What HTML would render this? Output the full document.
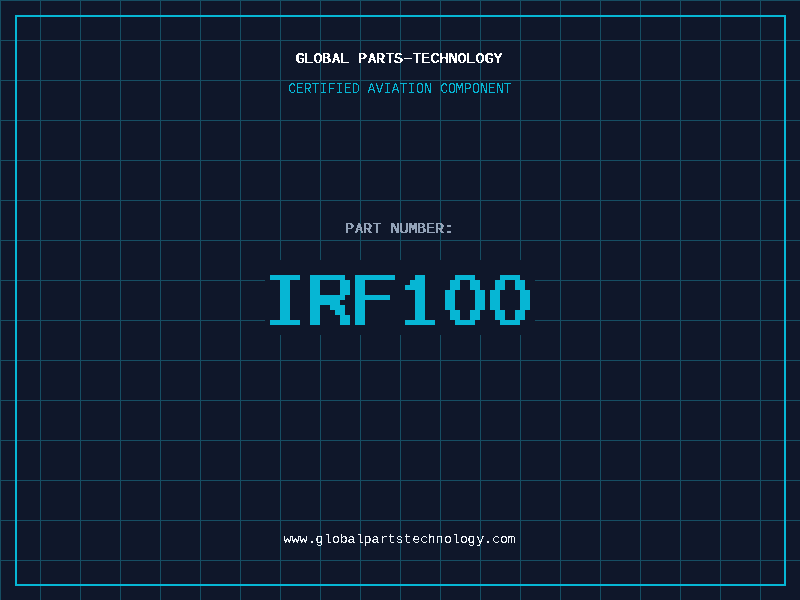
<!DOCTYPE html>
<html lang="en">
<head>
<meta charset="utf-8">
<title>IRF100 - Global Parts-Technology</title>
<style>
  html, body { margin: 0; padding: 0; }
  body {
    width: 800px; height: 600px; overflow: hidden; position: relative;
    background-color: #0f172a;
    background-image:
      linear-gradient(to right, #164e63 1px, transparent 1px),
      linear-gradient(to bottom, #164e63 1px, transparent 1px);
    background-size: 40px 40px;
    background-position: 0 0;
    font-family: "Liberation Mono", "DejaVu Sans Mono", monospace;
  }
  .frame {
    position: absolute; left: 15px; top: 15px; width: 771px; height: 571px;
    box-sizing: border-box; border: 2px solid #06b6d4;
  }
  .plate {
    position: absolute; left: 265px; top: 260px; width: 270px; height: 75px;
    background: #0f172a;
  }
  svg { position: absolute; left: 0; top: 0; }
  text { font-family: "Liberation Mono", "DejaVu Sans Mono", monospace; white-space: pre; }
  .title { font-size: 15px; fill: #ffffff; }
  .sub   { font-size: 15px; fill: #06b6d4; }
  .label { font-size: 15px; fill: #94a3b8; }
  .part  { font-size: 75px; fill: #06b6d4; }
  .dv    { font-family: "DejaVu Sans Mono", "Liberation Mono", monospace; font-size: 68.5px; }
  .zero  { font-family: "Liberation Sans", sans-serif; font-size: 74.25px; }
  .url   { font-size: 13.3333px; fill: #f1f5f9; }
</style>
</head>
<body>
  <div class="frame"></div>
  <div class="plate"></div>
  <svg width="800" height="600" viewBox="0 0 800 600">
    <defs>
      <filter id="crisp" x="0" y="0" width="800" height="600" filterUnits="userSpaceOnUse" color-interpolation-filters="sRGB">
        <feComponentTransfer>
          <feFuncA type="discrete" tableValues="0 0 0 0 0 0 0 0 0 0 1 1 1 1 1 1 1 1 1 1"/>
        </feComponentTransfer>
      </filter>
      <filter id="crispbold" x="0" y="0" width="800" height="600" filterUnits="userSpaceOnUse" color-interpolation-filters="sRGB">
        <feComponentTransfer result="bits">
          <feFuncA type="discrete" tableValues="0 0 0 0 0 0 0 0 0 0 1 1 1 1 1 1 1 1 1 1"/>
        </feComponentTransfer>
        <feOffset in="bits" dx="1" dy="0" result="strike"/>
        <feMerge>
          <feMergeNode in="bits"/>
          <feMergeNode in="strike"/>
        </feMerge>
      </filter>
      <filter id="pixel" x="265" y="260" width="270" height="75" filterUnits="userSpaceOnUse" color-interpolation-filters="sRGB">
        <feConvolveMatrix in="SourceAlpha" order="5" divisor="25" preserveAlpha="false" edgeMode="none"
          kernelMatrix="1 1 1 1 1  1 1 1 1 1  1 1 1 1 1  1 1 1 1 1  1 1 1 1 1" result="avg"/>
        <feFlood x="267" y="262" width="1" height="1" flood-color="#000" flood-opacity="1"/>
        <feComposite in2="SourceAlpha" operator="over" x="265" y="260" width="5" height="5"/>
        <feTile result="dots"/>
        <feComposite in="avg" in2="dots" operator="in"/>
        <feMorphology operator="dilate" radius="2"/>
        <feComponentTransfer result="cells">
          <feFuncA type="discrete" tableValues="0 0 0 0 0 0 0 0 0 0 0 1 1 1 1 1 1 1 1 1"/>
        </feComponentTransfer>
        <feOffset in="cells" dx="5" dy="0" result="strike"/>
        <feMerge result="mask">
          <feMergeNode in="cells"/>
          <feMergeNode in="strike"/>
        </feMerge>
        <feFlood flood-color="#06b6d4" flood-opacity="1"/>
        <feComposite in2="mask" operator="in"/>
      </filter>
    </defs>
    <g filter="url(#crispbold)"><text class="title" x="295.125 302.75 313 321.5 332 338.75 349 357.5 368 375.5 385.875 393.5 399.75 412.875 420.5 430 438.25 447.625 457 464.75 475 484.125 493" y="63">G<tspan x="302.75" textLength="10.352" lengthAdjust="spacingAndGlyphs">L</tspan>OB<tspan x="332" textLength="7.201" lengthAdjust="spacingAndGlyphs">A</tspan><tspan x="338.75" textLength="10.352" lengthAdjust="spacingAndGlyphs">L</tspan> P<tspan x="368" textLength="7.201" lengthAdjust="spacingAndGlyphs">A</tspan>R<tspan x="385.875" textLength="7.201" lengthAdjust="spacingAndGlyphs">T</tspan>S<tspan x="399.75" textLength="15.302" lengthAdjust="spacingAndGlyphs">-</tspan><tspan x="412.875" textLength="7.201" lengthAdjust="spacingAndGlyphs">T</tspan>EC<tspan x="438.25" textLength="10.532" lengthAdjust="spacingAndGlyphs">H</tspan><tspan x="447.625" textLength="9.902" lengthAdjust="spacingAndGlyphs">N</tspan>O<tspan x="464.75" textLength="10.352" lengthAdjust="spacingAndGlyphs">L</tspan>OGY</text></g>
    <g filter="url(#crisp)"><text class="sub" transform="scale(0.888889 1)" x="324.281 332.719 341.719 350.438 359.438 368.438 377.438 386.719 396 405 413.438 422.438 431.438 440.438 449.438 458.438 468 477.141 486 495.281 504 512.438 521.719 531 540.141 548.719 558.141 566.438" y="93">CERTIFIED AVIATION COMPONENT</text></g>
    <g filter="url(#crispbold)"><text class="label" x="344.5 355 362.5 372.875 381 389.625 398.5 408 416.5 425.5 434.5 441.25" y="233">P<tspan x="355" textLength="7.201" lengthAdjust="spacingAndGlyphs">A</tspan>R<tspan x="372.875" textLength="7.201" lengthAdjust="spacingAndGlyphs">T</tspan> <tspan x="389.625" textLength="9.902" lengthAdjust="spacingAndGlyphs">N</tspan><tspan x="398.5" textLength="9.902" lengthAdjust="spacingAndGlyphs">U</tspan>MBER<tspan x="441.25" textLength="14.402" lengthAdjust="spacingAndGlyphs">:</tspan></text></g>
    <text filter="url(#pixel)" class="part"><tspan x="261" y="324.5" textLength="43" lengthAdjust="spacingAndGlyphs">I</tspan><tspan x="303.75" y="322.875" textLength="48" lengthAdjust="spacingAndGlyphs" style="font-size:74.5px">R</tspan><tspan class="dv" x="343.5" y="324.25" textLength="51" lengthAdjust="spacingAndGlyphs">F</tspan><tspan x="398.25" y="324.5" textLength="36" lengthAdjust="spacingAndGlyphs">1</tspan><tspan class="zero" x="443.5" y="325.875" textLength="38.125" lengthAdjust="spacingAndGlyphs">0</tspan><tspan class="zero" x="488.5" y="325.875" textLength="38.125" lengthAdjust="spacingAndGlyphs">0</tspan></text>
    <g filter="url(#crisp)"><text class="url" x="283.5 291.5 299.5 308 315.5 324 332 339.75 347.5 356 363.5 371.5 380 387.75 395.5 403.75 412.25 420.25 427.5 435.5 444 452 460 467.5 476.125 484 492.25 500 507.5" y="543">www.globalpartstechnology.com</text></g>
  </svg>
</body>
</html>
